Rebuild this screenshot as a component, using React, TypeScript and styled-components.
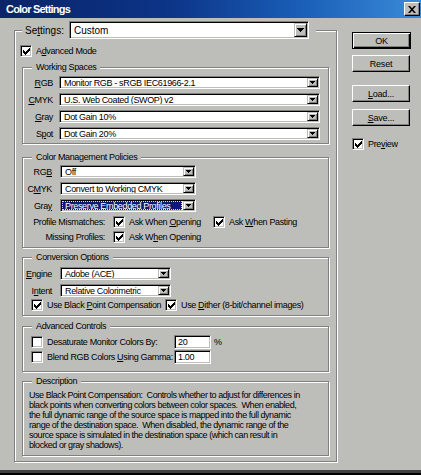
import React from 'react';
import styled, { createGlobalStyle, css } from 'styled-components';

const FACE = '#bdbeb9';
const SHADOW = '#808080';
const HILITE = '#ffffff';
const UI_FONT = '"Liberation Sans", Arial, sans-serif';

const GlobalStyle = createGlobalStyle`
  html, body {
    margin: 0;
    padding: 0;
    background: ${FACE};
  }
  body {
    font-family: ${UI_FONT};
    font-size: 9px;
    letter-spacing: -0.35px;
    color: #000;
  }
`;

const Window = styled.div`
  width: 421px;
  height: 475px;
  box-sizing: border-box;
  display: flex;
  flex-direction: column;
  background: ${FACE};
  border-bottom: 2px solid #000;
  box-shadow: inset 0 -3px 0 #404040;
`;

const TitleBar = styled.div`
  height: 18px;
  flex: none;
  display: flex;
  align-items: center;
  justify-content: space-between;
  padding: 0 1px 0 6px;
  background: linear-gradient(90deg, #0a2468 0%, #0c3487 40%, #1a5fb8 72%, #3a8ad8 100%);
`;

const Title = styled.span`
  color: #fff;
  font: bold 11px ${UI_FONT};
  letter-spacing: -0.8px;
`;

const raised = css`
  background: ${FACE};
  border: 1px solid;
  border-color: ${HILITE} #000 #000 ${HILITE};
  box-shadow: inset -1px -1px 0 ${SHADOW};
`;

const sunken = css`
  background: #fff;
  border: 1px solid;
  border-color: ${SHADOW} ${HILITE} ${HILITE} ${SHADOW};
  box-shadow: inset 1px 1px 0 #000, inset -1px -1px 0 ${FACE};
`;

const CloseButton = styled.button`
  width: 16px;
  height: 14px;
  padding: 0;
  box-sizing: border-box;
  display: flex;
  align-items: center;
  justify-content: center;
  ${raised}
`;

const Body = styled.div`
  flex: 1;
  display: flex;
  align-items: flex-start;
  gap: 15px;
  padding: 3px 0 0 14px;
`;

const Group = styled.fieldset<{ $w: number; $top?: number; $pad: string }>`
  width: ${p => p.$w}px;
  box-sizing: border-box;
  min-inline-size: 0;
  margin: ${p => p.$top ?? 0}px 0 0;
  padding: ${p => p.$pad};
  border: 1px solid ${SHADOW};
  box-shadow: inset 1px 1px 0 ${HILITE}, 1px 1px 0 ${HILITE};
  display: flex;
  flex-direction: column;
  gap: ${p => (p.$w > 310 ? 0 : 4)}px;
`;

const Legend = styled.legend`
  margin-left: 9px;
  padding: 0 4px;
  line-height: 10px;
  background: ${FACE};
`;

const SettingsLegend = styled.legend`
  display: flex;
  align-items: center;
  gap: 5px;
  margin: 0;
  padding: 0 7px 0 3px;
  font-size: 10px;
  letter-spacing: 0;
  background: ${FACE};
`;

const Key = styled.span`
  text-decoration: underline;
  text-underline-offset: 1px;
`;

const Field = styled.div<{ $gap: number; $indent?: number; $top?: number; $h?: number }>`
  display: flex;
  align-items: center;
  gap: ${p => p.$gap}px;
  padding-left: ${p => p.$indent ?? 0}px;
  margin-top: ${p => p.$top ?? 0}px;
  height: ${p => p.$h ?? 13}px;
  white-space: nowrap;
`;

const FieldLabel = styled.span<{ $w: number }>`
  width: ${p => p.$w}px;
  flex: none;
  text-align: right;
`;

const ComboBox = styled.div<{ $w: number; $h?: number }>`
  width: ${p => p.$w}px;
  height: ${p => p.$h ?? 13}px;
  box-sizing: border-box;
  flex: none;
  display: flex;
  padding: 1px;
  ${sunken}
`;

const ComboText = styled.span<{ $selected?: boolean }>`
  flex: 1;
  min-width: 0;
  display: flex;
  align-items: center;
  padding-left: 3px;
  overflow: hidden;
  ${p => p.$selected && css`
    margin-right: 1px;
    background: #0b1a78;
    color: #fff;
    outline: 1px dotted #e9e37a;
    outline-offset: -1px;
  `}
`;

const DropButton = styled.span<{ $w: number }>`
  flex: none;
  width: ${p => p.$w}px;
  box-sizing: border-box;
  display: flex;
  align-items: center;
  justify-content: center;
  background: ${FACE};
  border: 1px solid;
  border-color: ${FACE} #000 #000 ${FACE};
  box-shadow: inset 1px 1px 0 ${HILITE}, inset -1px -1px 0 ${SHADOW};
`;

const CheckBox = styled.span`
  width: 12px;
  height: 12px;
  box-sizing: border-box;
  flex: none;
  display: flex;
  align-items: center;
  justify-content: center;
  ${sunken}
`;

const Option = styled.span<{ $w?: number; $shift?: number }>`
  display: inline-flex;
  align-items: center;
  gap: 4px;
  flex: none;
  white-space: nowrap;
  margin-left: ${p => p.$shift ?? 0}px;
  ${p => p.$w !== undefined && `width: ${p.$w}px;`}
`;

const NumberBox = styled.input`
  width: 37px;
  height: 14px;
  box-sizing: border-box;
  flex: none;
  margin: 0;
  padding: 0 0 0 3px;
  font: 9px ${UI_FONT};
  letter-spacing: -0.35px;
  color: #000;
  ${sunken}
`;

const Unit = styled.span`
  margin-left: 3px;
`;

const Description = styled.p`
  margin: 0;
  padding-left: 6px;
  line-height: 10px;
  letter-spacing: -0.45px;
  white-space: nowrap;
`;

const SideColumn = styled.div`
  width: 59px;
  margin-top: 11px;
  display: flex;
  flex-direction: column;
  align-items: flex-start;
`;

const PushButton = styled.button<{ $default?: boolean; $top?: number }>`
  width: 58px;
  height: 17px;
  margin-top: ${p => p.$top ?? 0}px;
  padding: 0;
  box-sizing: border-box;
  font: 9px ${UI_FONT};
  letter-spacing: -0.2px;
  color: #000;
  ${raised}
  ${p => p.$default && css`
    width: 59px;
    border-color: #000;
    box-shadow: inset 1px 1px 0 ${HILITE}, inset -1px -1px 0 #000, inset -2px -2px 0 ${SHADOW};
  `}
`;

const SmallArrow = () => (
  <svg width="5" height="3" viewBox="0 0 5 3">
    <path d="M0 0H5V1H4V2H3V3H2V2H1V1H0Z" fill="#000" />
  </svg>
);

const BigArrow = () => (
  <svg width="7" height="4" viewBox="0 0 7 4">
    <path d="M0 0H7V1H6V2H5V3H4V4H3V3H2V2H1V1H0Z" fill="#000" />
  </svg>
);

const CheckMark = () => (
  <svg width="7" height="7" viewBox="0 0 7 7">
    <path
      d="M6 0h1v1h-1z M5 1h2v1h-2z M0 2h1v1h-1z M4 2h3v1h-3z M0 3h2v1h-2z M3 3h3v1h-3z M0 4h5v1h-5z M1 5h3v1h-3z M2 6h1v1h-1z"
      fill="#000"
    />
  </svg>
);

const Close = () => (
  <svg width="8" height="7" viewBox="0 0 8 7">
    <path d="M0 0h2l2 2.2L6 0h2L5 3.5 8 7H6L4 4.8 2 7H0l3-3.5z" fill="#000" />
  </svg>
);

function Combo({ value, width, selected }: { value: string; width: number; selected?: boolean }) {
  return (
    <ComboBox $w={width}>
      <ComboText $selected={selected}>{value}</ComboText>
      <DropButton $w={11}><SmallArrow /></DropButton>
    </ComboBox>
  );
}

function Check({ checked, children, width, shift }: {
  checked?: boolean; children?: React.ReactNode; width?: number; shift?: number;
}) {
  return (
    <Option $w={width} $shift={shift}>
      <CheckBox>{checked && <CheckMark />}</CheckBox>
      {children && <span>{children}</span>}
    </Option>
  );
}

const workingSpaces = [
  { label: <><Key>R</Key>GB</>, value: 'Monitor RGB - sRGB IEC61966-2.1' },
  { label: <><Key>C</Key>MYK</>, value: 'U.S. Web Coated (SWOP) v2' },
  { label: <><Key>G</Key>ray</>, value: 'Dot Gain 10%' },
  { label: <>S<Key>p</Key>ot</>, value: 'Dot Gain 20%' },
];

const policies = [
  { label: <>RG<Key>B</Key></>, value: 'Off' },
  { label: <>C<Key>M</Key>YK</>, value: 'Convert to Working CMYK' },
  { label: <>Gra<Key>y</Key></>, value: 'Preserve Embedded Profiles', selected: true },
];

export default function App() {
  return (
    <>
      <GlobalStyle />
      <Window>
        <TitleBar>
          <Title>Color Settings</Title>
          <CloseButton aria-label="Close"><Close /></CloseButton>
        </TitleBar>

        <Body>
          <Group $w={323} $pad="6px 7px 5px">
            <SettingsLegend>
              <span>Se<Key>t</Key>tings:</span>
              <ComboBox $w={240} $h={18}>
                <ComboText>Custom</ComboText>
                <DropButton $w={13}><BigArrow /></DropButton>
              </ComboBox>
            </SettingsLegend>

            <Field $gap={0} $h={12}>
              <Check checked shift={-2}>A<Key>d</Key>vanced Mode</Check>
            </Field>

            <Group $w={307} $top={5} $pad="4px 8px 3px 0">
              <Legend>Working Spaces</Legend>
              {workingSpaces.map((row, i) => (
                <Field key={i} $gap={6}>
                  <FieldLabel $w={30}>{row.label}</FieldLabel>
                  <Combo value={row.value} width={261} />
                </Field>
              ))}
            </Group>

            <Group $w={307} $top={8} $pad="3px 8px 4px 0">
              <Legend>Color Management Policies</Legend>
              {policies.map((row, i) => (
                <Field key={i} $gap={8}>
                  <FieldLabel $w={29}>{row.label}</FieldLabel>
                  <Combo value={row.value} width={136} selected={row.selected} />
                </Field>
              ))}
              <Field $gap={8} $h={12}>
                <FieldLabel $w={82}>Profile Mismatches:</FieldLabel>
                <Check checked width={92}>Ask When <Key>O</Key>pening</Check>
                <Check checked>Ask <Key>W</Key>hen Pasting</Check>
              </Field>
              <Field $gap={8} $h={12} $top={-1}>
                <FieldLabel $w={82}>Missing Profiles:</FieldLabel>
                <Check checked>Ask W<Key>h</Key>en Opening</Check>
              </Field>
            </Group>

            <Group $w={307} $top={4} $pad="5px 8px 4px 0">
              <Legend>Conversion Options</Legend>
              <Field $gap={8}>
                <FieldLabel $w={29}><Key>E</Key>ngine</FieldLabel>
                <Combo value="Adobe (ACE)" width={111} />
              </Field>
              <Field $gap={8}>
                <FieldLabel $w={29}>I<Key>n</Key>tent</FieldLabel>
                <Combo value="Relative Colorimetric" width={111} />
              </Field>
              <Field $gap={0} $indent={8} $h={12} $top={-2}>
                <Check checked width={134}>Use Black <Key>P</Key>oint Compensation</Check>
                <Check checked>Use <Key>D</Key>ither (8-bit/channel images)</Check>
              </Field>
            </Group>

            <Group $w={307} $top={5} $pad="4px 8px 7px 0">
              <Legend>Advanced Controls</Legend>
              <Field $gap={0} $indent={8} $h={14}>
                <Check width={143}>Desaturate Monitor Colors By:</Check>
                <NumberBox readOnly defaultValue="20" />
                <Unit>%</Unit>
              </Field>
              <Field $gap={0} $indent={8} $h={14} $top={-3}>
                <Check width={143}>Blend RGB Colors <Key>U</Key>sing Gamma:</Check>
                <NumberBox readOnly defaultValue="1.00" />
              </Field>
            </Group>

            <Group $w={307} $top={4} $pad="4px 8px 5px 0">
              <Legend>Description</Legend>
              <Description>
                Use Black Point Compensation:&nbsp; Controls whether to adjust for differences in<br />
                black points when converting colors between color spaces.&nbsp; When enabled,<br />
                the full dynamic range of the source space is mapped into the full dynamic<br />
                range of the destination space.&nbsp; When disabled, the dynamic range of the<br />
                source space is simulated in the destination space (which can result in<br />
                blocked or gray shadows).
              </Description>
            </Group>
          </Group>

          <SideColumn>
            <PushButton $default>OK</PushButton>
            <PushButton $top={6}>Reset</PushButton>
            <PushButton $top={13}><Key>L</Key>oad...</PushButton>
            <PushButton $top={7}><Key>S</Key>ave...</PushButton>
            <Field $gap={0} $top={12} $h={12}>
              <Check checked>Pre<Key>v</Key>iew</Check>
            </Field>
          </SideColumn>
        </Body>
      </Window>
    </>
  );
}
